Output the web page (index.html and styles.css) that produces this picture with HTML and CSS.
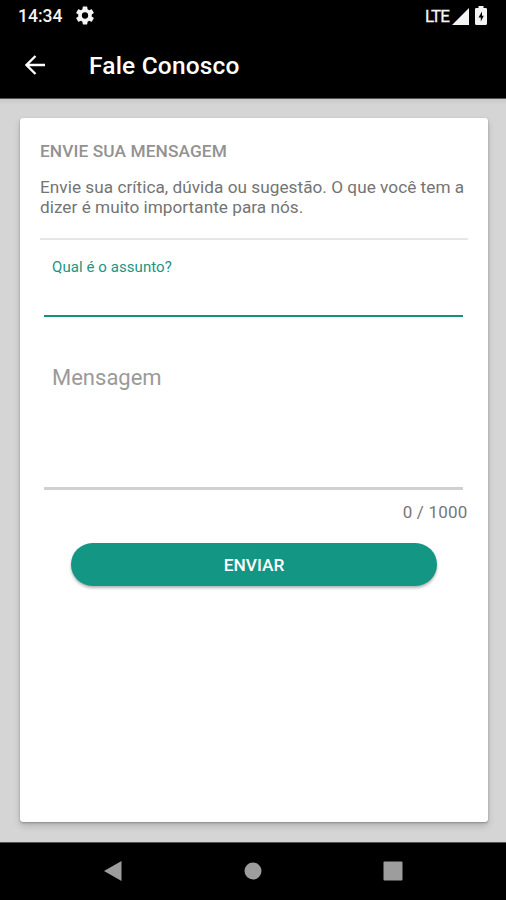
FILE: index.html
```html
<!DOCTYPE html>
<html lang="pt-BR">
<head>
<meta charset="utf-8">
<title>Fale Conosco</title>
<link rel="stylesheet" href="styles.css">
</head>
<body>
<div class="screen">
  <div class="status">
    <span class="time">14:34</span>
    <svg class="gear" viewBox="2 2 20 20"><path fill-rule="evenodd" d="M19.43 12.98c.04-.32.07-.64.07-.98s-.03-.66-.07-.98l2.11-1.65c.19-.15.24-.42.12-.64l-2-3.46c-.12-.22-.39-.3-.61-.22l-2.49 1c-.52-.4-1.08-.73-1.69-.98l-.38-2.65A.49.49 0 0 0 14 2h-4c-.25 0-.46.18-.49.42l-.38 2.65c-.61.25-1.17.59-1.69.98l-2.49-1c-.23-.09-.49 0-.61.22l-2 3.46c-.13.22-.07.49.12.64l2.11 1.65c-.04.32-.07.65-.07.98s.03.66.07.98l-2.11 1.65c-.19.15-.24.42-.12.64l2 3.46c.12.22.39.3.61.22l2.49-1c.52.4 1.08.73 1.69.98l.38 2.65c.03.24.24.42.49.42h4c.25 0 .46-.18.49-.42l.38-2.65c.61-.25 1.17-.59 1.69-.98l2.49 1c.23.09.49 0 .61-.22l2-3.46c.12-.22.07-.49-.12-.64zM12 15.5a3.5 3.5 0 1 1 0-7 3.5 3.5 0 0 1 0 7z"/></svg>
    <span class="network">LTE</span>
    <svg class="signal" viewBox="0 0 17 17"><path d="M0 17L17 0V17z"/></svg>
    <svg class="battery" viewBox="0 0 12 19"><path fill-rule="evenodd" d="M3.5 0h5v2h2.200Q12 2 12 3.300v14.200q0 1.500-1.500 1.500h-9Q0 19 0 17.500V3.300Q0 2 1.300 2h2.200zM7 5.500L3.500 11.500h2.300V15.500L8.800 9.800H7z"/></svg>
  </div>
  <header class="appbar">
    <svg class="back" viewBox="0 0 20 20"><path d="M20 10H2M10.500 1L1.500 10l9 9"/></svg>
    <h1 class="title">Fale Conosco</h1>
  </header>
  <main class="content">
    <section class="card">
      <h2 class="heading">ENVIE SUA MENSAGEM</h2>
      <p class="intro"><span class="intro-first">Envie sua crítica, dúvida ou sugestão. O que você tem a</span><br><span class="intro-second">dizer é muito importante para nós.</span></p>
      <div class="field subject"><span class="subject-label">Qual é o assunto?</span></div>
      <div class="field message"><span class="message-label">Mensagem</span></div>
      <div class="counter"><span class="count">0 / 1000</span></div>
      <button class="send"><span class="send-label">ENVIAR</span></button>
    </section>
  </main>
  <nav class="navbar">
    <svg class="nav-icon" viewBox="0 0 20 22"><path d="M1 11L18.500 1V21z"/></svg>
    <svg class="nav-icon" viewBox="0 0 20 22"><circle cx="10" cy="11" r="8.500"/></svg>
    <svg class="nav-icon" viewBox="0 0 20 22"><rect x=".5" y="1.500" width="19" height="19" rx="1"/></svg>
  </nav>
</div>
</body>
</html>
```
FILE: styles.css
```css
* { box-sizing: border-box; }
body { margin: 0; font-family: Roboto, sans-serif; }
.screen { width: 506px; height: 900px; display: flex; flex-direction: column; background: #d5d5d5; overflow: hidden; }
.status { height: 32px; flex: none; display: flex; align-items: center; padding: 0 18px; background: #000; color: #f4f4f4; fill: #f4f4f4; }
.time { width: 58px; font-size: 17.5px; font-weight: 500; }
.gear { width: 18px; height: 19px; margin-bottom: 2px; }
.network { margin-left: auto; margin-right: 3px; padding-bottom: 1px; font-size: 17px; letter-spacing: -.9px; -webkit-text-stroke: .3px #f4f4f4; }
.signal { width: 17px; height: 17px; margin-right: 6px; }
.battery { width: 12px; height: 19px; margin-right: 1px; margin-bottom: 1px; }
.appbar { height: 67px; flex: none; display: flex; align-items: center; padding: 0 25px; background: #000; color: #fff; border-bottom: 1px solid #555; }
.back { width: 20px; height: 20px; fill: none; stroke: #fff; stroke-width: 2.3; }
.title { margin: 0 0 0 44px; padding-top: 2px; font-size: 24.5px; line-height: 30px; font-weight: 500; letter-spacing: .18px; white-space: nowrap; }
.content { flex: 1; padding: 19px 18.5px 20px 20px; display: flex; background: linear-gradient(#c9c9c9, #d5d5d5 6px); }
.card { flex: 1; display: flex; flex-direction: column; padding: 22px 20px 0; background: #fff; border-radius: 3px; box-shadow: 0 1px 2px #8b8b8b, 0 4px 7px rgba(0,0,0,.16); }
.heading { margin: 0; height: 22px; font-size: 17.3px; line-height: 22px; font-weight: 500; letter-spacing: .1px; color: #929292; white-space: nowrap; }
.intro { margin: 15px 0 0; height: 63px; border-bottom: 2px solid #e6e6e6; font-size: 17.2px; line-height: 20px; letter-spacing: .03px; color: #747474; white-space: nowrap; padding-bottom: 21px; }
.field { margin: 0 5px 0 4px; padding-left: 8px; white-space: nowrap; }
.subject { height: 77px; padding-top: 17px; border-bottom: 2px solid #14907e; color: #21947f; font-size: 15px; line-height: 20px; letter-spacing: .07px; }
.message { height: 173px; padding-top: 47px; border-bottom: 3px solid #d0d0d0; color: #9a9a9a; font-size: 22px; line-height: 28px; }
.counter { height: 53px; padding-top: 11px; text-align: right; color: #777; font-size: 17px; line-height: 22px; letter-spacing: .2px; }
.send { width: 366px; height: 43px; margin: 0 0 0 31px; padding: 0; border: 0; border-radius: 22px; background: #149685; color: #fff; font: 500 17.3px/44px Roboto, sans-serif; box-shadow: 0 2px 3px rgba(0,0,0,.3); }
.navbar { height: 58px; flex: none; display: flex; justify-content: space-between; align-items: center; padding: 0 103px 2px; background: #000; border-top: 1px solid #555; fill: #9d9d9d; }
.nav-icon { width: 20px; height: 22px; }
```
